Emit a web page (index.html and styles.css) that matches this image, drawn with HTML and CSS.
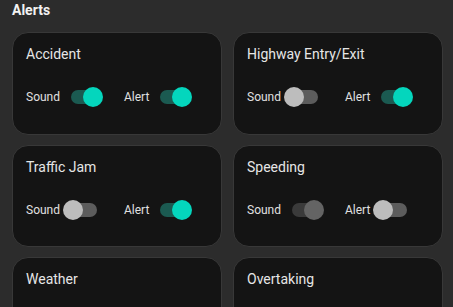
FILE: index.html
```html
<!DOCTYPE html>
<html lang="en">
<head>
<meta charset="utf-8">
<title>Alerts</title>
<link rel="stylesheet" href="styles.css">
</head>
<body>
<h2 class="heading">Alerts</h2>
<div class="grid">
  <div class="card">
    <div class="title">Accident</div>
    <div class="controls">
      <div class="group"><span class="label">Sound</span><span class="switch on"><span class="knob"></span></span></div>
      <div class="group"><span class="label">Alert</span><span class="switch on"><span class="knob"></span></span></div>
    </div>
  </div>
  <div class="card">
    <div class="title">Highway Entry/Exit</div>
    <div class="controls">
      <div class="group"><span class="label">Sound</span><span class="switch off"><span class="knob"></span></span></div>
      <div class="group"><span class="label">Alert</span><span class="switch on"><span class="knob"></span></span></div>
    </div>
  </div>
  <div class="card">
    <div class="title">Traffic Jam</div>
    <div class="controls">
      <div class="group"><span class="label">Sound</span><span class="switch off"><span class="knob"></span></span></div>
      <div class="group"><span class="label">Alert</span><span class="switch on"><span class="knob"></span></span></div>
    </div>
  </div>
  <div class="card">
    <div class="title">Speeding</div>
    <div class="controls">
      <div class="group"><span class="label">Sound</span><span class="switch disabled"><span class="knob"></span></span></div>
      <div class="group"><span class="label">Alert</span><span class="switch off"><span class="knob"></span></span></div>
    </div>
  </div>
  <div class="card">
    <div class="title">Weather</div>
    <div class="controls">
      <div class="group"><span class="label">Sound</span><span class="switch on"><span class="knob"></span></span></div>
      <div class="group"><span class="label">Alert</span><span class="switch on"><span class="knob"></span></span></div>
    </div>
  </div>
  <div class="card">
    <div class="title">Overtaking</div>
    <div class="controls">
      <div class="group"><span class="label">Sound</span><span class="switch on"><span class="knob"></span></span></div>
      <div class="group"><span class="label">Alert</span><span class="switch on"><span class="knob"></span></span></div>
    </div>
  </div>
</div>
</body>
</html>
```

FILE: styles.css
```css
html, body {
  margin: 0;
  padding: 0;
  background: #2c2c2c;
  font-family: Roboto, "Noto Sans", "Liberation Sans", sans-serif;
  overflow: hidden;
  height: 307px;
}

.heading {
  margin: 0 0 12px 0;
  padding-left: 12px;
  font-size: 14px;
  line-height: 20px;
  font-weight: 700;
  color: #f2f2f2;
}

.grid {
  display: grid;
  grid-template-columns: 1fr 1fr;
  column-gap: 11px;
  row-gap: 10px;
  padding: 0 10px 0 12px;
}

.card {
  background: #141414;
  border: 1px solid #383838;
  border-radius: 16px;
  padding: 11px 13px 24.5px 13px;
}

.title {
  font-size: 14px;
  line-height: 20px;
  color: #e6e6e6;
}

.controls {
  display: flex;
  align-items: center;
  gap: 27px;
  margin-top: 21px;
  height: 24px;
}

.group {
  display: flex;
  align-items: center;
  gap: 11px;
}

.label {
  font-size: 12px;
  line-height: 16px;
  color: #e0e0e0;
}

.switch {
  position: relative;
  display: block;
  width: 26px;
  height: 14px;
  border-radius: 7px;
  background: #5c5c5c;
}

.knob {
  position: absolute;
  top: -3px;
  left: -8px;
  width: 20px;
  height: 20px;
  border-radius: 50%;
  background: #bdbdbd;
}

.switch.on {
  background: #1b5a51;
}

.switch.on .knob {
  left: 12px;
  background: #04d6bd;
}

.switch.disabled {
  background: #3a3a3a;
}

.switch.disabled .knob {
  left: 12px;
  background: #646464;
}
```
